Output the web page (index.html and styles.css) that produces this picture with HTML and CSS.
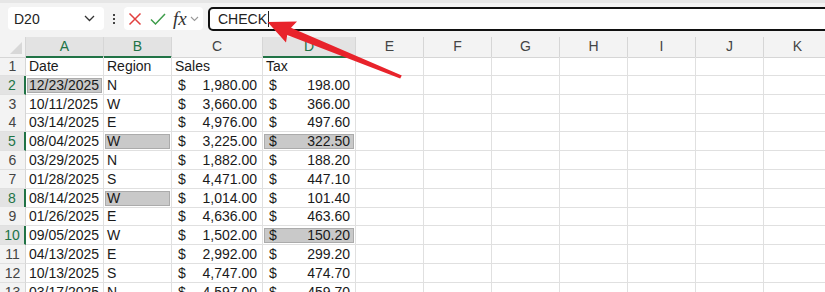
FILE: index.html
```html
<!DOCTYPE html>
<html>
<head>
<meta charset="utf-8">
<link rel="stylesheet" href="styles.css">
</head>
<body>
<div class="app">
  <div class="toolbar">
    <div class="namebox">
      <span class="nb-text">D20</span>
      <svg class="chev" width="11" height="7" viewBox="0 0 11 7"><path d="M1 1 L5.5 5.5 L10 1" fill="none" stroke="#333" stroke-width="1.3"/></svg>
    </div>
    <div class="dots"><i></i><i></i><i></i></div>
    <div class="fxbox">
      <svg class="ic" width="14" height="14" viewBox="0 0 14 14"><path d="M1.5 1.5 L12.5 12.5 M12.5 1.5 L1.5 12.5" stroke="#e2403f" stroke-width="1.5" fill="none"/></svg>
      <svg class="ic" width="16" height="14" viewBox="0 0 16 14"><path d="M1 7.5 L5.5 12 L15 2" stroke="#3d9c4a" stroke-width="1.5" fill="none"/></svg>
      <span class="fx">fx</span>
      <svg class="chev2" width="9" height="6" viewBox="0 0 9 6"><path d="M1 1 L4.5 4.5 L8 1" fill="none" stroke="#999" stroke-width="1.1"/></svg>
    </div>
    <div class="formula"><span class="ftext">CHECK</span><span class="caret"></span></div>
  </div>

  <div class="sheet">
    <div class="row head">
      <div class="corner"><span class="tri"></span></div>
      <div class="ch sel">A</div>
      <div class="ch sel">B</div>
      <div class="ch">C</div>
      <div class="ch sel">D</div>
      <div class="ch-rest"><span>E</span><span>F</span><span>G</span><span>H</span><span>I</span><span>J</span><span>K</span></div>
    </div>

    <div class="row"><div class="rh">1</div><div class="c">Date</div><div class="c">Region</div><div class="c">Sales</div><div class="c">Tax</div><div class="rest"></div></div>
    <div class="row"><div class="rh sel">2</div><div class="c hl"><span>12/23/2025</span></div><div class="c">N</div><div class="c m"><span>$</span><span>1,980.00</span></div><div class="c m"><span>$</span><span>198.00</span></div><div class="rest"></div></div>
    <div class="row"><div class="rh">3</div><div class="c">10/11/2025</div><div class="c">W</div><div class="c m"><span>$</span><span>3,660.00</span></div><div class="c m"><span>$</span><span>366.00</span></div><div class="rest"></div></div>
    <div class="row"><div class="rh">4</div><div class="c">03/14/2025</div><div class="c">E</div><div class="c m"><span>$</span><span>4,976.00</span></div><div class="c m"><span>$</span><span>497.60</span></div><div class="rest"></div></div>
    <div class="row"><div class="rh sel">5</div><div class="c">08/04/2025</div><div class="c hl"><span>W</span></div><div class="c m"><span>$</span><span>3,225.00</span></div><div class="c m hl"><span>$</span><span>322.50</span></div><div class="rest"></div></div>
    <div class="row"><div class="rh">6</div><div class="c">03/29/2025</div><div class="c">N</div><div class="c m"><span>$</span><span>1,882.00</span></div><div class="c m"><span>$</span><span>188.20</span></div><div class="rest"></div></div>
    <div class="row"><div class="rh">7</div><div class="c">01/28/2025</div><div class="c">S</div><div class="c m"><span>$</span><span>4,471.00</span></div><div class="c m"><span>$</span><span>447.10</span></div><div class="rest"></div></div>
    <div class="row"><div class="rh sel">8</div><div class="c">08/14/2025</div><div class="c hl"><span>W</span></div><div class="c m"><span>$</span><span>1,014.00</span></div><div class="c m"><span>$</span><span>101.40</span></div><div class="rest"></div></div>
    <div class="row"><div class="rh">9</div><div class="c">01/26/2025</div><div class="c">E</div><div class="c m"><span>$</span><span>4,636.00</span></div><div class="c m"><span>$</span><span>463.60</span></div><div class="rest"></div></div>
    <div class="row"><div class="rh sel">10</div><div class="c">09/05/2025</div><div class="c">W</div><div class="c m"><span>$</span><span>1,502.00</span></div><div class="c m hl"><span>$</span><span>150.20</span></div><div class="rest"></div></div>
    <div class="row"><div class="rh">11</div><div class="c">04/13/2025</div><div class="c">E</div><div class="c m"><span>$</span><span>2,992.00</span></div><div class="c m"><span>$</span><span>299.20</span></div><div class="rest"></div></div>
    <div class="row"><div class="rh">12</div><div class="c">10/13/2025</div><div class="c">S</div><div class="c m"><span>$</span><span>4,747.00</span></div><div class="c m"><span>$</span><span>474.70</span></div><div class="rest"></div></div>
    <div class="row"><div class="rh">13</div><div class="c">03/17/2025</div><div class="c">N</div><div class="c m"><span>$</span><span>4,597.00</span></div><div class="c m"><span>$</span><span>459.70</span></div><div class="rest"></div></div>
  </div>

  <svg class="arrow" width="825" height="292" viewBox="0 0 825 292">
    <polygon points="267.5,22 297,21.5 291,27.8 401.8,75.4 400.2,78.6 287.2,35 286,42.5" fill="#e8232b"/>
  </svg>
</div>
</body>
</html>
```

FILE: styles.css
```css
* { box-sizing: border-box; }
html, body { margin: 0; padding: 0; }
body {
  width: 825px;
  height: 292px;
  overflow: hidden;
  background: #ffffff;
  font-family: "Liberation Sans", Arial, sans-serif;
  font-size: 14px;
  color: #1a1a1a;
}
.app { position: relative; width: 825px; height: 292px; overflow: hidden; }

/* toolbar */
.toolbar {
  height: 37px;
  display: flex;
  align-items: center;
  padding-left: 8px;
  background: #f3f3f3;
  border-top: 3px solid #e6e6e6;
}
.namebox {
  width: 96px;
  height: 23px;
  background: #fff;
  border-radius: 4px;
  display: flex;
  align-items: center;
  justify-content: space-between;
  padding: 0 9px 0 6px;
  margin-top: -3px;
}
.nb-text { font-size: 14px; color: #222; }
.dots {
  width: 20px;
  display: flex;
  flex-direction: column;
  align-items: center;
  gap: 2px;
  margin-top: -3px;
}
.dots i { display: block; width: 2px; height: 2px; background: #444; }
.fxbox {
  width: 79px;
  height: 23px;
  background: #fff;
  border-radius: 4px;
  display: flex;
  align-items: center;
  padding: 0 4px;
  gap: 8px;
  margin-top: -3px;
}
.fx {
  font-family: "Liberation Serif", "Times New Roman", serif;
  font-style: italic;
  font-size: 19px;
  line-height: 20px;
  color: #333;
  margin-left: -1px;
}
.chev2 { margin-left: -5px; }
.formula {
  flex: 1;
  height: 24px;
  margin-left: 5px;
  margin-right: -10px;
  margin-top: -3px;
  background: #fff;
  border: 2px solid #111;
  border-radius: 5px 0 0 5px;
  display: flex;
  align-items: center;
  padding-left: 8px;
}
.ftext { color: #222; font-size: 14px; }
.caret { display: inline-block; width: 1px; height: 16px; background: #222; margin-left: 1px; }

/* sheet */
.sheet { display: flex; flex-direction: column; }
.row {
  display: grid;
  grid-template-columns: 26px 78px 68px 91px 93px 1fr;
  height: 18.8px;
}
.row.head { height: 20px; }
.corner {
  position: relative;
  background: #f3f3f3;
  border-right: 1px solid #d6d6d6;
  border-bottom: 1px solid #d6d6d6;
}
.tri {
  position: absolute;
  right: 3px;
  bottom: 3px;
  width: 0; height: 0;
  border-left: 12px solid transparent;
  border-bottom: 12px solid #d8d8d8;
}
.ch {
  background: #f3f3f3;
  border-right: 1px solid #d6d6d6;
  border-bottom: 1px solid #d6d6d6;
  color: #444;
  text-align: center;
  line-height: 19px;
}
.ch.sel {
  background: #e3e3e3;
  color: #217346;
  border-bottom: 2px solid #217346;
}
.ch-rest {
  display: flex;
  background: #f3f3f3;
  border-bottom: 1px solid #d6d6d6;
}
.ch-rest span {
  flex: 0 0 68px;
  text-align: center;
  line-height: 19px;
  color: #444;
  border-right: 1px solid #d6d6d6;
}
.rh {
  background: #f3f3f3;
  border-right: 1px solid #d6d6d6;
  border-bottom: 1px solid #e0e0e0;
  color: #444;
  text-align: center;
  line-height: 18px;
}
.rh.sel {
  background: #e3e3e3;
  color: #217346;
  border-right: 2px solid #217346;
}
.c {
  border-right: 1px solid #e0e0e0;
  border-bottom: 1px solid #e0e0e0;
  padding: 0 2px 0 3px;
  line-height: 18px;
  white-space: nowrap;
  position: relative;
}
.c.m {
  display: flex;
  justify-content: space-between;
  padding: 0 5px 0 6px;
}
.c.hl::before {
  content: "";
  position: absolute;
  left: 1px; right: 1px; top: 2px; bottom: 1px;
  background: #c9c9c9;
  border: 1px solid #ababab;
}
.c.hl span { position: relative; }
.rest {
  border-bottom: 1px solid #e0e0e0;
  background: repeating-linear-gradient(to right, transparent 0, transparent 67px, #e0e0e0 67px, #e0e0e0 68px);
}
.arrow { position: absolute; left: 0; top: 0; pointer-events: none; }
```
